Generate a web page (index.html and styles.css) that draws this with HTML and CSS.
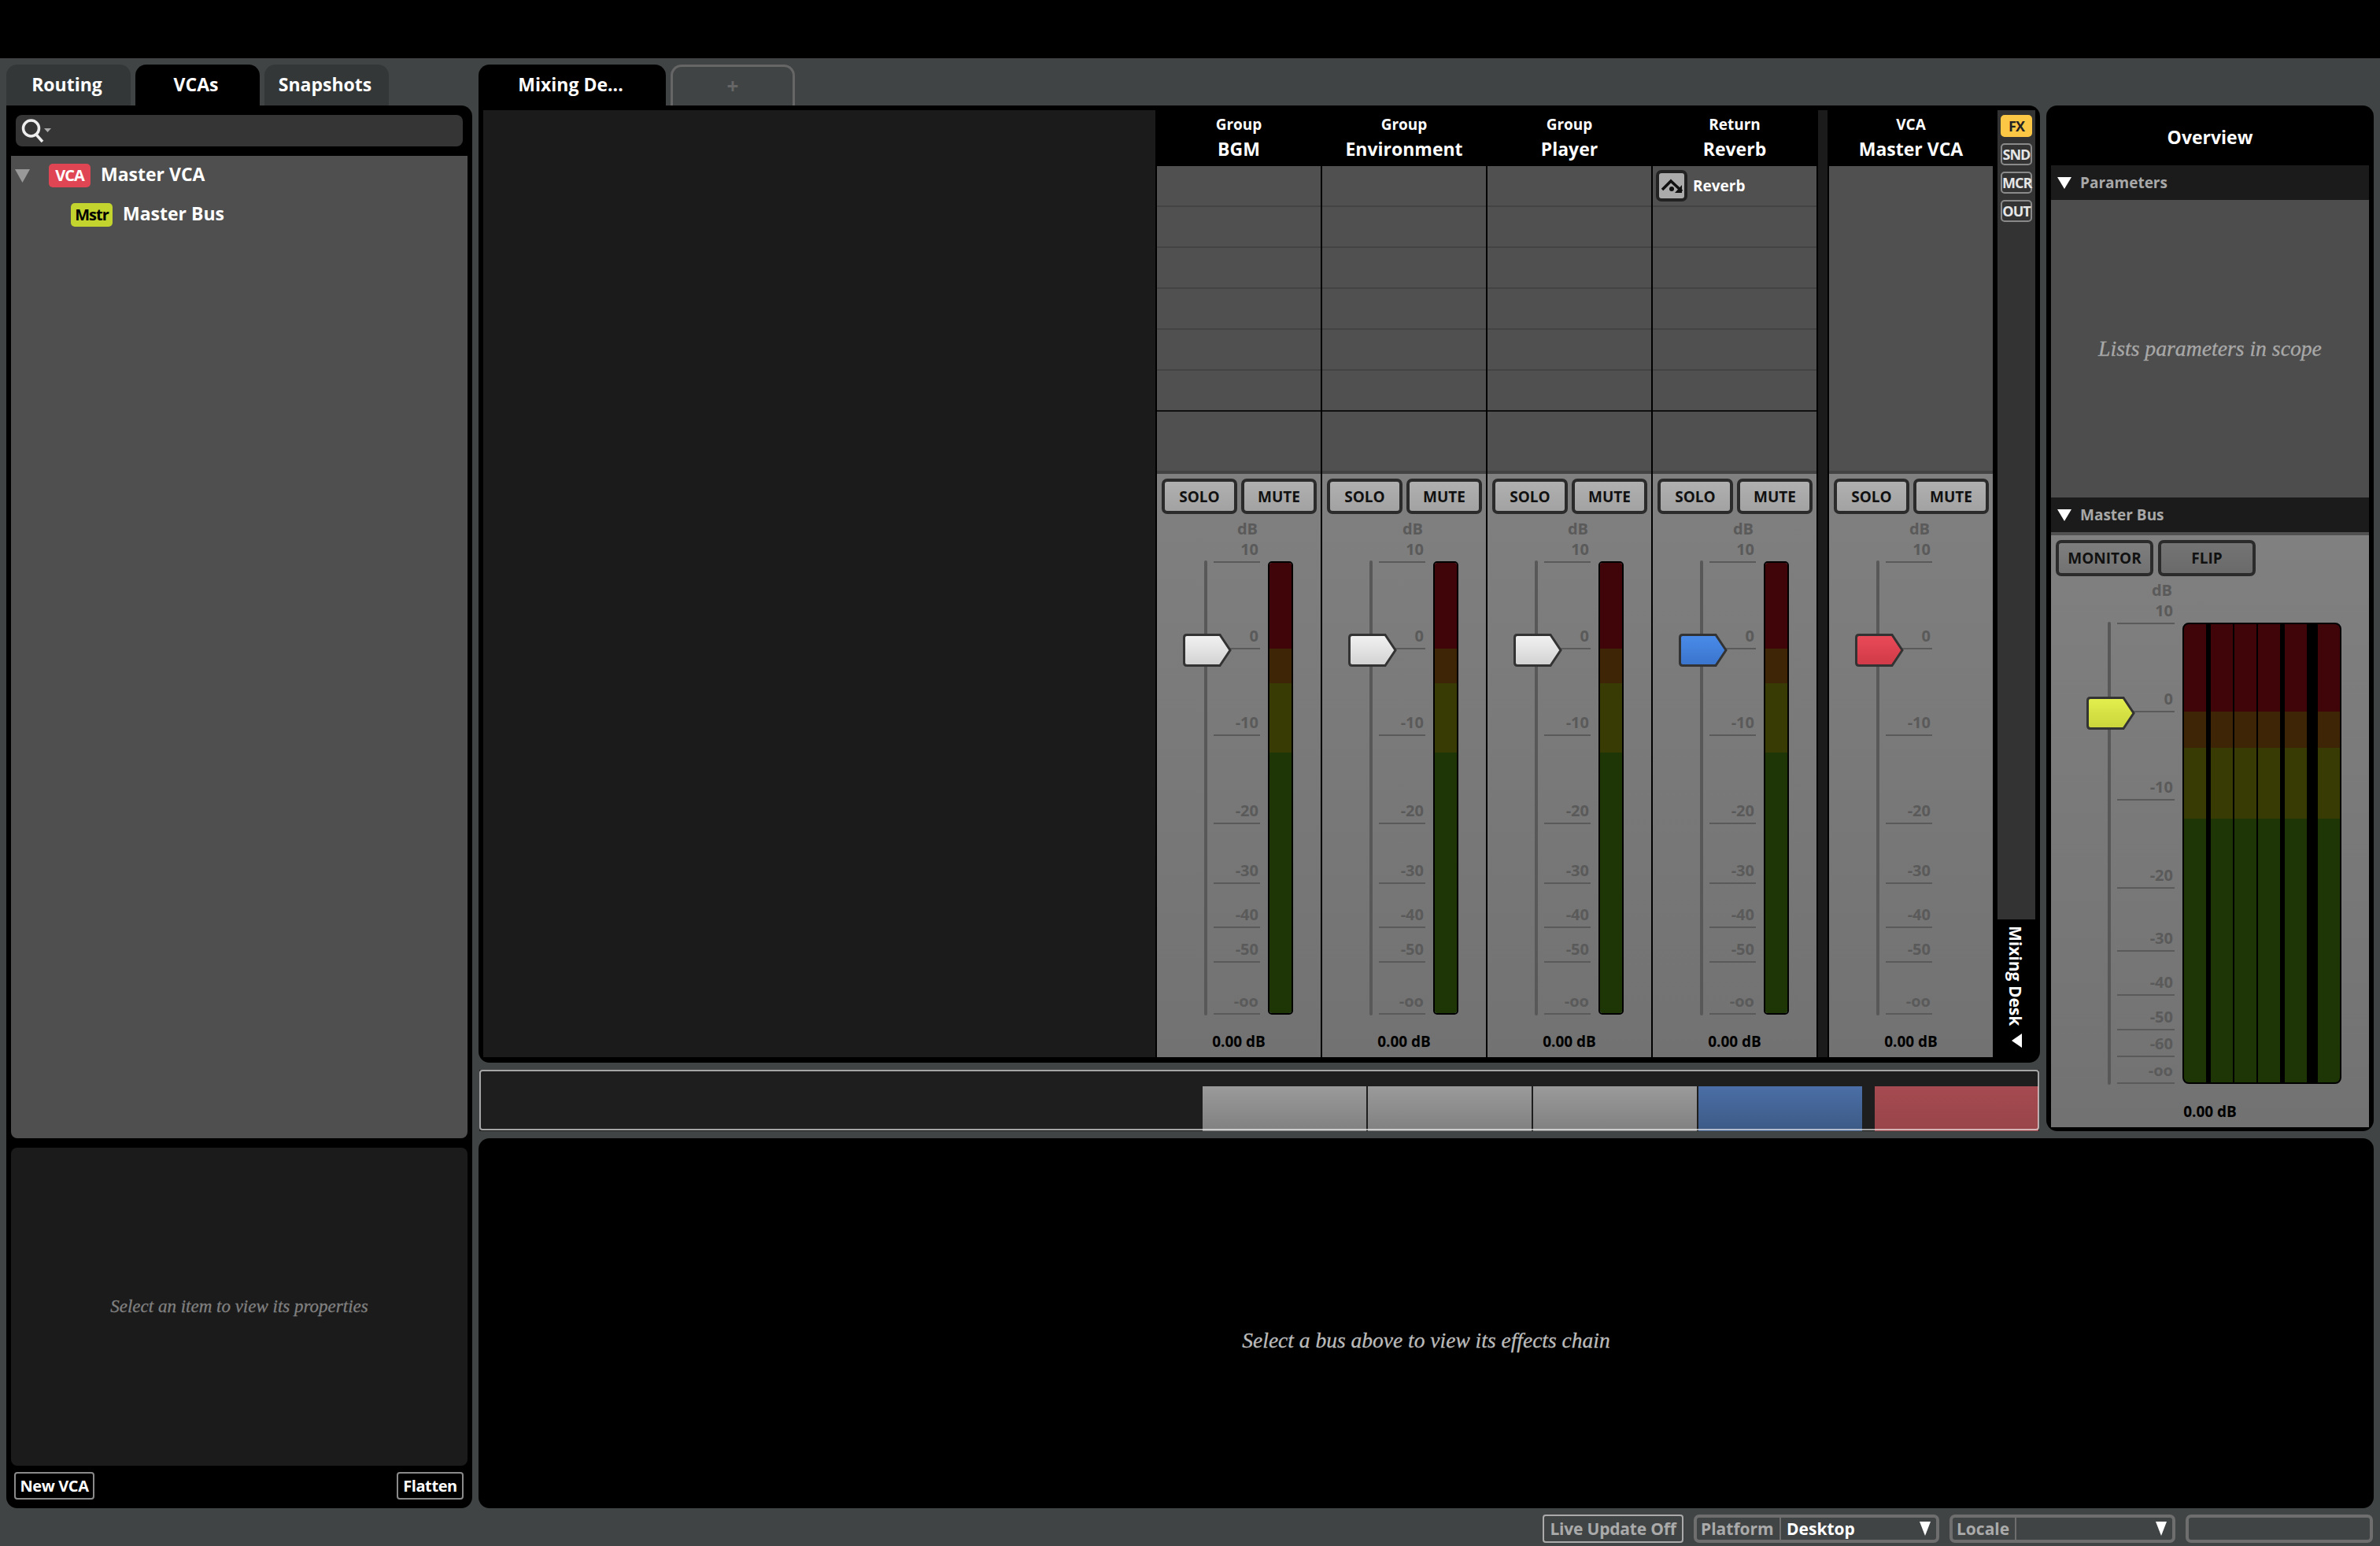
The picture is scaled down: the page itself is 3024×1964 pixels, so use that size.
FILE: index.html
```html
<!DOCTYPE html>
<html lang="en">
<head>
    <meta charset="UTF-8">
    <title>Mixer</title>
    <link rel="stylesheet" href="styles.css">
</head>
<body>
    <div class="topbar"></div>

    <div class="workspace">
        <!-- browser on the left -->
        <div class="browser">
            <div class="tabs">
                <div class="tab">Routing</div>
                <div class="tab active">VCAs</div>
                <div class="tab">Snapshots</div>
            </div>
            <div class="browser-panel">
                <div class="search">
                    <svg class="search-icon" width="40" height="30" viewBox="0 0 40 30">
                        <circle cx="12.5" cy="12" r="10" fill="none" stroke="#eee" stroke-width="3.5"/>
                        <path d="M19 20 L27 29" stroke="#eee" stroke-width="3.5"/>
                        <path d="M29 12 L38 12 L33.5 17 Z" fill="#aaa"/>
                    </svg>
                </div>
                <div class="tree">
                    <div class="tree-row">
                        <svg class="tree-arrow" width="19" height="17" viewBox="0 0 19 17"><path d="M0 0 H19 L9.5 17 Z" fill="#999"/></svg>
                        <span class="badge badge-vca">VCA</span>
                        <span class="tree-label">Master VCA</span>
                    </div>
                    <div class="tree-row child">
                        <span class="badge badge-mstr">Mstr</span>
                        <span class="tree-label">Master Bus</span>
                    </div>
                </div>
                <div class="properties">
                    <span class="hint">Select an item to view its properties</span>
                </div>
                <div class="browser-actions">
                    <div class="small-btn new-vca">New VCA</div>
                    <div class="small-btn flatten">Flatten</div>
                </div>
            </div>
        </div>

        <!-- mixing desk -->
        <div class="mixer">
            <div class="tabs">
                <div class="tab active desk-tab">Mixing De...</div>
                <div class="tab add-tab">+</div>
            </div>
            <div class="desk">
                <div class="desk-empty"></div>

                <div class="strip">
                    <div class="strip-head"><span class="strip-type">Group</span><span class="strip-name">BGM</span></div>
                    <div class="slots">
                        <div class="slot"></div><div class="slot"></div><div class="slot"></div><div class="slot"></div><div class="slot"></div><div class="slot last"></div>
                        <div class="sends"></div>
                    </div>
                    <div class="strip-body">
                        <div class="btn-row"><div class="btn">SOLO</div><div class="btn">MUTE</div></div>
                        <div class="fader">
                            <div class="track"></div>
                            <div class="scale">
                                <div class="db-label">dB</div>
                                <div class="tick" style="height:31px">10</div>
                                <div class="tick" style="height:110px">0</div>
                                <div class="tick" style="height:110px">-10</div>
                                <div class="tick" style="height:112px">-20</div>
                                <div class="tick" style="height:76px">-30</div>
                                <div class="tick" style="height:56px">-40</div>
                                <div class="tick" style="height:44px">-50</div>
                                <div class="tick" style="height:66px">-oo</div>
                            </div>
                            <div class="meter"><div class="channel"></div></div>
                            <svg class="handle" width="62" height="42" viewBox="0 0 62 42"><use href="#handle-shape" fill="url(#grad-white)"/></svg>
                        </div>
                        <div class="value">0.00 dB</div>
                    </div>
                </div>

                <div class="strip">
                    <div class="strip-head"><span class="strip-type">Group</span><span class="strip-name">Environment</span></div>
                    <div class="slots">
                        <div class="slot"></div><div class="slot"></div><div class="slot"></div><div class="slot"></div><div class="slot"></div><div class="slot last"></div>
                        <div class="sends"></div>
                    </div>
                    <div class="strip-body">
                        <div class="btn-row"><div class="btn">SOLO</div><div class="btn">MUTE</div></div>
                        <div class="fader">
                            <div class="track"></div>
                            <div class="scale">
                                <div class="db-label">dB</div>
                                <div class="tick" style="height:31px">10</div>
                                <div class="tick" style="height:110px">0</div>
                                <div class="tick" style="height:110px">-10</div>
                                <div class="tick" style="height:112px">-20</div>
                                <div class="tick" style="height:76px">-30</div>
                                <div class="tick" style="height:56px">-40</div>
                                <div class="tick" style="height:44px">-50</div>
                                <div class="tick" style="height:66px">-oo</div>
                            </div>
                            <div class="meter"><div class="channel"></div></div>
                            <svg class="handle" width="62" height="42" viewBox="0 0 62 42"><use href="#handle-shape" fill="url(#grad-white)"/></svg>
                        </div>
                        <div class="value">0.00 dB</div>
                    </div>
                </div>

                <div class="strip">
                    <div class="strip-head"><span class="strip-type">Group</span><span class="strip-name">Player</span></div>
                    <div class="slots">
                        <div class="slot"></div><div class="slot"></div><div class="slot"></div><div class="slot"></div><div class="slot"></div><div class="slot last"></div>
                        <div class="sends"></div>
                    </div>
                    <div class="strip-body">
                        <div class="btn-row"><div class="btn">SOLO</div><div class="btn">MUTE</div></div>
                        <div class="fader">
                            <div class="track"></div>
                            <div class="scale">
                                <div class="db-label">dB</div>
                                <div class="tick" style="height:31px">10</div>
                                <div class="tick" style="height:110px">0</div>
                                <div class="tick" style="height:110px">-10</div>
                                <div class="tick" style="height:112px">-20</div>
                                <div class="tick" style="height:76px">-30</div>
                                <div class="tick" style="height:56px">-40</div>
                                <div class="tick" style="height:44px">-50</div>
                                <div class="tick" style="height:66px">-oo</div>
                            </div>
                            <div class="meter"><div class="channel"></div></div>
                            <svg class="handle" width="62" height="42" viewBox="0 0 62 42"><use href="#handle-shape" fill="url(#grad-white)"/></svg>
                        </div>
                        <div class="value">0.00 dB</div>
                    </div>
                </div>

                <div class="strip">
                    <div class="strip-head"><span class="strip-type">Return</span><span class="strip-name">Reverb</span></div>
                    <div class="slots">
                        <div class="slot effect">
                            <svg class="effect-icon" width="40" height="40" viewBox="0 0 40 40">
                                <rect x="2" y="2" width="36" height="36" rx="5" fill="#ababab" stroke="#222" stroke-width="4"/>
                                <path d="M8 25 L19 14 L33 27" fill="none" stroke="#111" stroke-width="3.5"/>
                                <path d="M33 19 V29 H24 Z" fill="#111"/>
                                <circle cx="20" cy="24" r="3" fill="#111"/>
                            </svg>
                            <span>Reverb</span>
                        </div>
                        <div class="slot"></div><div class="slot"></div><div class="slot"></div><div class="slot"></div><div class="slot last"></div>
                        <div class="sends"></div>
                    </div>
                    <div class="strip-body">
                        <div class="btn-row"><div class="btn">SOLO</div><div class="btn">MUTE</div></div>
                        <div class="fader">
                            <div class="track"></div>
                            <div class="scale">
                                <div class="db-label">dB</div>
                                <div class="tick" style="height:31px">10</div>
                                <div class="tick" style="height:110px">0</div>
                                <div class="tick" style="height:110px">-10</div>
                                <div class="tick" style="height:112px">-20</div>
                                <div class="tick" style="height:76px">-30</div>
                                <div class="tick" style="height:56px">-40</div>
                                <div class="tick" style="height:44px">-50</div>
                                <div class="tick" style="height:66px">-oo</div>
                            </div>
                            <div class="meter"><div class="channel"></div></div>
                            <svg class="handle" width="62" height="42" viewBox="0 0 62 42"><use href="#handle-shape" fill="url(#grad-blue)"/></svg>
                        </div>
                        <div class="value">0.00 dB</div>
                    </div>
                </div>

                <div class="desk-divider"></div>

                <div class="strip">
                    <div class="strip-head"><span class="strip-type">VCA</span><span class="strip-name">Master VCA</span></div>
                    <div class="slots">
                        <div class="vca-slots"></div>
                    </div>
                    <div class="strip-body">
                        <div class="btn-row"><div class="btn">SOLO</div><div class="btn">MUTE</div></div>
                        <div class="fader no-meter">
                            <div class="track"></div>
                            <div class="scale">
                                <div class="db-label">dB</div>
                                <div class="tick" style="height:31px">10</div>
                                <div class="tick" style="height:110px">0</div>
                                <div class="tick" style="height:110px">-10</div>
                                <div class="tick" style="height:112px">-20</div>
                                <div class="tick" style="height:76px">-30</div>
                                <div class="tick" style="height:56px">-40</div>
                                <div class="tick" style="height:44px">-50</div>
                                <div class="tick" style="height:66px">-oo</div>
                            </div>
                            <svg class="handle" width="62" height="42" viewBox="0 0 62 42"><use href="#handle-shape" fill="url(#grad-red)"/></svg>
                        </div>
                        <div class="value">0.00 dB</div>
                    </div>
                </div>

                <div class="side">
                    <div class="side-buttons">
                        <div class="side-btn on">FX</div>
                        <div class="side-btn">SND</div>
                        <div class="side-btn">MCR</div>
                        <div class="side-btn">OUT</div>
                    </div>
                    <div class="side-tab">
                        <span class="side-tab-label">Mixing Desk</span>
                        <svg width="13" height="18" viewBox="0 0 13 18"><path d="M13 0 V18 L0 9 Z" fill="#fff"/></svg>
                    </div>
                </div>
            </div>
            <div class="minimap">
                <div class="mini-block"></div>
                <div class="mini-block"></div>
                <div class="mini-block"></div>
                <div class="mini-block blue"></div>
                <div class="mini-block red"></div>
                <div class="mini-view"></div>
            </div>
        </div>

        <!-- overview on the right -->
        <div class="overview">
            <div class="overview-title">Overview</div>
            <div class="section-head">
                <svg width="18" height="15" viewBox="0 0 18 15"><path d="M0 0 H18 L9 15 Z" fill="#fff"/></svg>
                <span>Parameters</span>
            </div>
            <div class="parameters"><span class="hint light">Lists parameters in scope</span></div>
            <div class="section-head">
                <svg width="18" height="15" viewBox="0 0 18 15"><path d="M0 0 H18 L9 15 Z" fill="#fff"/></svg>
                <span>Master Bus</span>
            </div>
            <div class="section-sep"></div>
            <div class="master-body">
                <div class="btn-row master-btns"><div class="btn dim">MONITOR</div><div class="btn dim darker">FLIP</div></div>
                <div class="fader master-fader">
                    <div class="track"></div>
                    <div class="scale">
                        <div class="db-label">dB</div>
                        <div class="tick" style="height:31px">10</div>
                        <div class="tick" style="height:112px">0</div>
                        <div class="tick" style="height:112px">-10</div>
                        <div class="tick" style="height:112px">-20</div>
                        <div class="tick" style="height:80px">-30</div>
                        <div class="tick" style="height:56px">-40</div>
                        <div class="tick" style="height:44px">-50</div>
                        <div class="tick" style="height:34px">-60</div>
                        <div class="tick" style="height:34px">-oo</div>
                    </div>
                    <div class="meter">
                        <div class="channel"></div><div class="channel"></div><div class="channel"></div>
                        <div class="channel"></div><div class="channel"></div><div class="channel"></div>
                    </div>
                    <svg class="handle" width="62" height="42" viewBox="0 0 62 42"><use href="#handle-shape" fill="url(#grad-yellow)"/></svg>
                </div>
                <div class="value">0.00 dB</div>
            </div>
        </div>

        <!-- effects chain -->
        <div class="chain"><span class="hint chain-hint">Select a bus above to view its effects chain</span></div>
    </div>

    <div class="statusbar">
        <div class="status-btn">Live Update Off</div>
        <div class="status-field platform">
            <span class="field-name">Platform</span>
            <span class="field-value">Desktop</span>
            <svg width="14" height="18" viewBox="0 0 14 18"><path d="M0 0 H14 L7 18 Z" fill="#fff"/></svg>
        </div>
        <div class="status-field locale">
            <span class="field-name">Locale</span>
            <span class="field-value"></span>
            <svg width="14" height="18" viewBox="0 0 14 18"><path d="M0 0 H14 L7 18 Z" fill="#fff"/></svg>
        </div>
        <div class="status-field empty"></div>
    </div>

    <!-- shared handle shape and fills -->
    <svg class="defs" width="0" height="0">
        <defs>
            <path id="handle-shape" d="M5 1.5 H47 L60 21 L47 40.5 H5 Q1.5 40.5 1.5 37 V5 Q1.5 1.5 5 1.5 Z" stroke="#333" stroke-width="3"/>
            <linearGradient id="grad-white" x1="0" y1="0" x2="0" y2="1"><stop offset="0" stop-color="#f2f2f2"/><stop offset="1" stop-color="#d2d2d2"/></linearGradient>
            <linearGradient id="grad-blue" x1="0" y1="0" x2="0" y2="1"><stop offset="0" stop-color="#4a8cea"/><stop offset="1" stop-color="#3a74cc"/></linearGradient>
            <linearGradient id="grad-red" x1="0" y1="0" x2="0" y2="1"><stop offset="0" stop-color="#ea4a58"/><stop offset="1" stop-color="#d03a48"/></linearGradient>
            <linearGradient id="grad-yellow" x1="0" y1="0" x2="0" y2="1"><stop offset="0" stop-color="#e4f04e"/><stop offset="1" stop-color="#c8d43a"/></linearGradient>
        </defs>
    </svg>
</body>
</html>
```

FILE: styles.css
```css
html, body {
    margin: 0;
    padding: 0;
    height: 1964px;
    overflow: hidden;
}
body {
    background: #404445;
    color: #fff;
    font-family: "Open Sans", "Noto Sans", sans-serif;
    font-weight: 700;
    font-size: 19px;
}
.topbar {
    height: 74px;
    background: #000;
}
.workspace {
    display: grid;
    grid-template-columns: 592px 1984px 416px;
    grid-template-rows: 1355px 470px;
    column-gap: 8px;
    row-gap: 9px;
    padding: 8px;
}

/* tabs */
.tabs {
    display: flex;
    gap: 6px;
    height: 52px;
}
.tab {
    width: 158px;
    height: 52px;
    box-sizing: border-box;
    padding: 9px 4px 0 0;
    line-height: 32px;
    text-align: center;
    font-size: 23px;
    background: #333738;
    border-radius: 14px 14px 0 0;
}
.tab.active {
    background: #000;
}
.desk-tab {
    width: 238px;
}
.add-tab {
    width: 158px;
    background: transparent;
    border: 3px solid #666;
    border-bottom: none;
    color: #666;
    padding: 8px 0 0 0;
    font-size: 26px;
}

/* browser */
.browser {
    grid-row: 1 / 3;
    display: flex;
    flex-direction: column;
}
.browser-panel {
    flex: 1;
    background: #000;
    border-radius: 0 14px 14px 14px;
    padding: 12px 6px 0 6px;
    display: flex;
    flex-direction: column;
}
.search {
    margin: 0 6px 12px 6px;
    height: 40px;
    background: #353535;
    border-radius: 8px;
    display: flex;
    align-items: center;
    padding-left: 7px;
}
.tree {
    height: 1248px;
    background: #4f4f4f;
    border-radius: 0 0 8px 8px;
    padding-top: 10px;
    box-sizing: border-box;
    font-size: 23px;
}
.tree-row {
    display: flex;
    align-items: center;
    height: 30px;
    margin-bottom: 20px;
    padding-left: 5px;
    gap: 6px;
}
.tree-row.child {
    padding-left: 76px;
}
.tree-arrow {
    margin-right: 18px;
}
.tree-label {
    margin-bottom: 4px;
}
.badge {
    height: 30px;
    width: 53px;
    display: inline-block;
    margin-right: 7px;
    text-align: center;
    line-height: 30px;
    border-radius: 5px;
    font-size: 20px;
    letter-spacing: -1px;
}
.badge-vca {
    background: #e04553;
}
.badge-mstr {
    background: #c3d42f;
    color: #000;
}
.properties {
    margin-top: 12px;
    height: 404px;
    background: #1b1b1b;
    border-radius: 8px;
    display: flex;
    align-items: center;
    justify-content: center;
}
.browser-actions {
    display: flex;
    justify-content: space-between;
    padding: 8px 5px 0 4px;
}
.small-btn {
    height: 35px;
    box-sizing: border-box;
    line-height: 31px;
    text-align: center;
    border: 2px solid #8a8a8a;
    border-radius: 4px;
    font-size: 20px;
    letter-spacing: -0.4px;
}
.new-vca {
    width: 102px;
}
.flatten {
    width: 85px;
}
.hint {
    font-family: "Liberation Serif", serif;
    font-style: italic;
    font-weight: 400;
    color: #808080;
    font-size: 23px;
    -webkit-text-stroke: 0.3px;
}
.hint.light {
    color: #a8a8a8;
    font-size: 27.7px;
}

/* mixing desk */
.mixer {
    display: flex;
    flex-direction: column;
}
.desk {
    height: 1216px;
    box-sizing: border-box;
    background: #000;
    border-radius: 0 14px 14px 14px;
    padding: 6px;
    padding-bottom: 7px;
    display: flex;
}
.desk-empty {
    width: 854px;
    background: #1b1b1b;
}
.desk-divider {
    width: 12px;
    margin-left: 2px;
    background: #1b1b1b;
}
.strip {
    width: 208px;
    margin-left: 2px;
    display: flex;
    flex-direction: column;
}
.strip-head {
    height: 71px;
    display: flex;
    flex-direction: column;
    align-items: center;
    padding-top: 5px;
    box-sizing: border-box;
}
.strip-type {
    font-size: 19px;
    line-height: 26px;
}
.strip-name {
    font-size: 23px;
    line-height: 36px;
}
.slots {
    height: 391px;
    background: #505050;
}
.slot {
    height: 52px;
    box-sizing: border-box;
    border-bottom: 2px solid #434343;
}
.slot.last {
    border-bottom-color: #111;
}
.slot.effect {
    display: flex;
    align-items: center;
    padding: 0 0 0 4px;
    gap: 7px;
}
.sends {
    height: 79px;
    box-sizing: border-box;
    border-bottom: 4px solid #434343;
}
.vca-slots {
    height: 391px;
    box-sizing: border-box;
    border-bottom: 4px solid #434343;
}
.strip-body {
    flex: 1;
    display: flex;
    flex-direction: column;
    background: linear-gradient(#808080, #727272);
    position: relative;
}
.btn-row {
    display: flex;
    gap: 5px;
    padding: 6px 0 0 6px;
}
.btn {
    width: 96px;
    height: 45px;
    box-sizing: border-box;
    border: 4px solid #2b2b2b;
    border-radius: 7px;
    background: linear-gradient(#b0b0b0, #a2a2a2);
    color: #111;
    text-align: center;
    line-height: 39px;
    font-size: 19px;
}
.btn.dim {
    width: 124px;
    height: 46px;
    background: linear-gradient(#7e7e7e, #727272);
}
.btn.darker {
    background: linear-gradient(#747474, #6a6a6a);
}
.master-btns {
    gap: 6px;
}

/* fader, scale and level meter */
.fader {
    position: relative;
    display: flex;
    margin-top: 7px;
    padding-left: 60px;
    color: #5a5a5a;
    font-size: 20px;
}
.track {
    width: 4px;
    height: 578px;
    margin-top: 52px;
    background: #585858;
    border-radius: 2px;
}
.scale {
    width: 59px;
    margin-left: 8px;
}
.db-label {
    height: 24px;
    line-height: 24px;
    text-align: right;
    padding-right: 3px;
}
.tick {
    box-sizing: border-box;
    display: flex;
    align-items: flex-end;
    justify-content: flex-end;
    line-height: 24px;
    padding: 0 2px 3px 0;
    border-bottom: 2px solid #5a5a5a;
}
.meter {
    width: 32px;
    height: 576px;
    box-sizing: border-box;
    margin: 53px 0 0 10px;
    border: 2px solid #000;
    border-radius: 5px;
    background: #000;
    display: flex;
    overflow: hidden;
}
.channel {
    flex: 1;
    background: linear-gradient(#3f0509 0 109px, #3e2505 109px 153px, #393b05 153px 241px, #1e3605 241px);
}
.handle {
    position: absolute;
    left: 33px;
    top: 145px;
}
.value {
    margin-top: auto;
    height: 40px;
    line-height: 40px;
    text-align: center;
    color: #000;
}

/* sidebar buttons of the desk */
.side {
    width: 48px;
    margin-left: 6px;
    display: flex;
    flex-direction: column;
    background: #333;
}
.side-buttons {
    flex: 1;
    display: flex;
    flex-direction: column;
    align-items: center;
    gap: 8px;
    padding-top: 6px;
}
.side-btn {
    width: 40px;
    height: 28px;
    box-sizing: border-box;
    border: 2px solid #8a8a8a;
    border-radius: 5px;
    text-align: center;
    line-height: 24px;
    font-size: 18px;
    letter-spacing: -1px;
    color: #e6e6e6;
}
.side-btn.on {
    border-color: #fcc745;
    background: #fcc745;
    color: #222;
}
.side-tab {
    height: 175px;
    box-sizing: border-box;
    background: #000;
    display: flex;
    flex-direction: column;
    align-items: center;
    padding-top: 8px;
    gap: 10px;
    font-size: 21px;
}
.side-tab-label {
    writing-mode: vertical-rl;
    line-height: 26px;
    margin-right: 2px;
}

/* strip overview under the desk */
.minimap {
    position: relative;
    margin: 9px 1px 0 1px;
    padding-right: 1px;
    height: 78px;
    background: #1e1e1e;
    display: flex;
    justify-content: flex-end;
    align-items: flex-end;
    gap: 2px;
}
.mini-block {
    width: 208px;
    height: 57px;
    background: linear-gradient(#9a9a9a, #808080);
}
.mini-block.blue {
    background: linear-gradient(#4a6ea6, #3d5a85);
}
.mini-block.red {
    margin-left: 14px;
    background: linear-gradient(#a54a50, #984549);
}
.mini-view {
    position: absolute;
    left: 0;
    right: 0;
    top: 0;
    height: 77px;
    box-sizing: border-box;
    border: 2px solid rgba(255, 255, 255, 0.6);
    border-radius: 4px;
}

/* overview panel */
.overview {
    margin-top: 52px;
    background: #000;
    border-radius: 14px;
    padding: 0 6px 5px 6px;
    display: flex;
    flex-direction: column;
}
.overview-title {
    height: 76px;
    line-height: 80px;
    text-align: center;
    font-size: 23px;
}
.section-head {
    height: 44px;
    flex: none;
    background: #1b1b1b;
    color: #a8a8a8;
    display: flex;
    align-items: center;
    padding-left: 8px;
    gap: 11px;
}
.parameters {
    height: 378px;
    background: #4d4d4d;
    display: flex;
    align-items: center;
    justify-content: center;
}
.section-sep {
    height: 4px;
    flex: none;
    background: #505050;
}
.master-body {
    flex: 1;
    display: flex;
    flex-direction: column;
    background: linear-gradient(#808080, #727272);
}
.master-fader {
    margin-top: 6px;
    padding-left: 72px;
}
.master-fader .track {
    height: 588px;
}
.master-fader .scale {
    width: 73px;
}
.master-fader .meter {
    width: 202px;
    height: 586px;
    border-radius: 8px;
}
.master-fader .channel {
    flex: none;
    width: 28px;
    background: linear-gradient(#3f0509 0 111px, #3e2505 111px 157px, #393b05 157px 247px, #1e3605 247px);
}
.master-fader .channel:nth-child(2) { margin-left: 6px; }
.master-fader .channel:nth-child(3) { margin-left: 2px; }
.master-fader .channel:nth-child(4) { margin-left: 2px; }
.master-fader .channel:nth-child(5) { margin-left: 6px; }
.master-fader .channel:nth-child(6) { margin-left: 14px; }
.master-fader .handle {
    left: 45px;
    top: 147px;
}

/* effects chain */
.chain {
    grid-column: 2 / 4;
    background: #000;
    border-radius: 14px;
    display: flex;
    align-items: center;
    justify-content: center;
    padding-top: 44px;
    box-sizing: border-box;
}
.chain-hint {
    color: #bbb;
    font-size: 27.5px;
}

/* bottom bar */
.statusbar {
    display: flex;
    justify-content: flex-end;
    gap: 13px;
    padding-right: 9px;
    height: 36px;
    font-size: 21px;
    color: #aaa;
}
.status-btn {
    width: 179px;
    box-sizing: border-box;
    border: 2px solid #aaa;
    border-radius: 4px;
    text-align: center;
    line-height: 32px;
    letter-spacing: -0.2px;
}
.status-field {
    box-sizing: border-box;
    border: 4px solid #6e6e6e;
    border-radius: 7px;
    display: flex;
    align-items: center;
    line-height: 28px;
}
.platform {
    width: 312px;
}
.locale {
    width: 287px;
}
.empty {
    width: 238px;
}
.field-name {
    padding: 0 5px;
    border-right: 2px solid #6e6e6e;
    height: 28px;
    flex: none;
    box-sizing: border-box;
}
.platform .field-name {
    width: 107px;
}
.locale .field-name {
    width: 81px;
}
.field-value {
    flex: 1;
    padding-left: 7px;
    color: #fff;
}
.status-field svg {
    margin-right: 7px;
}
.defs {
    position: absolute;
}
```
